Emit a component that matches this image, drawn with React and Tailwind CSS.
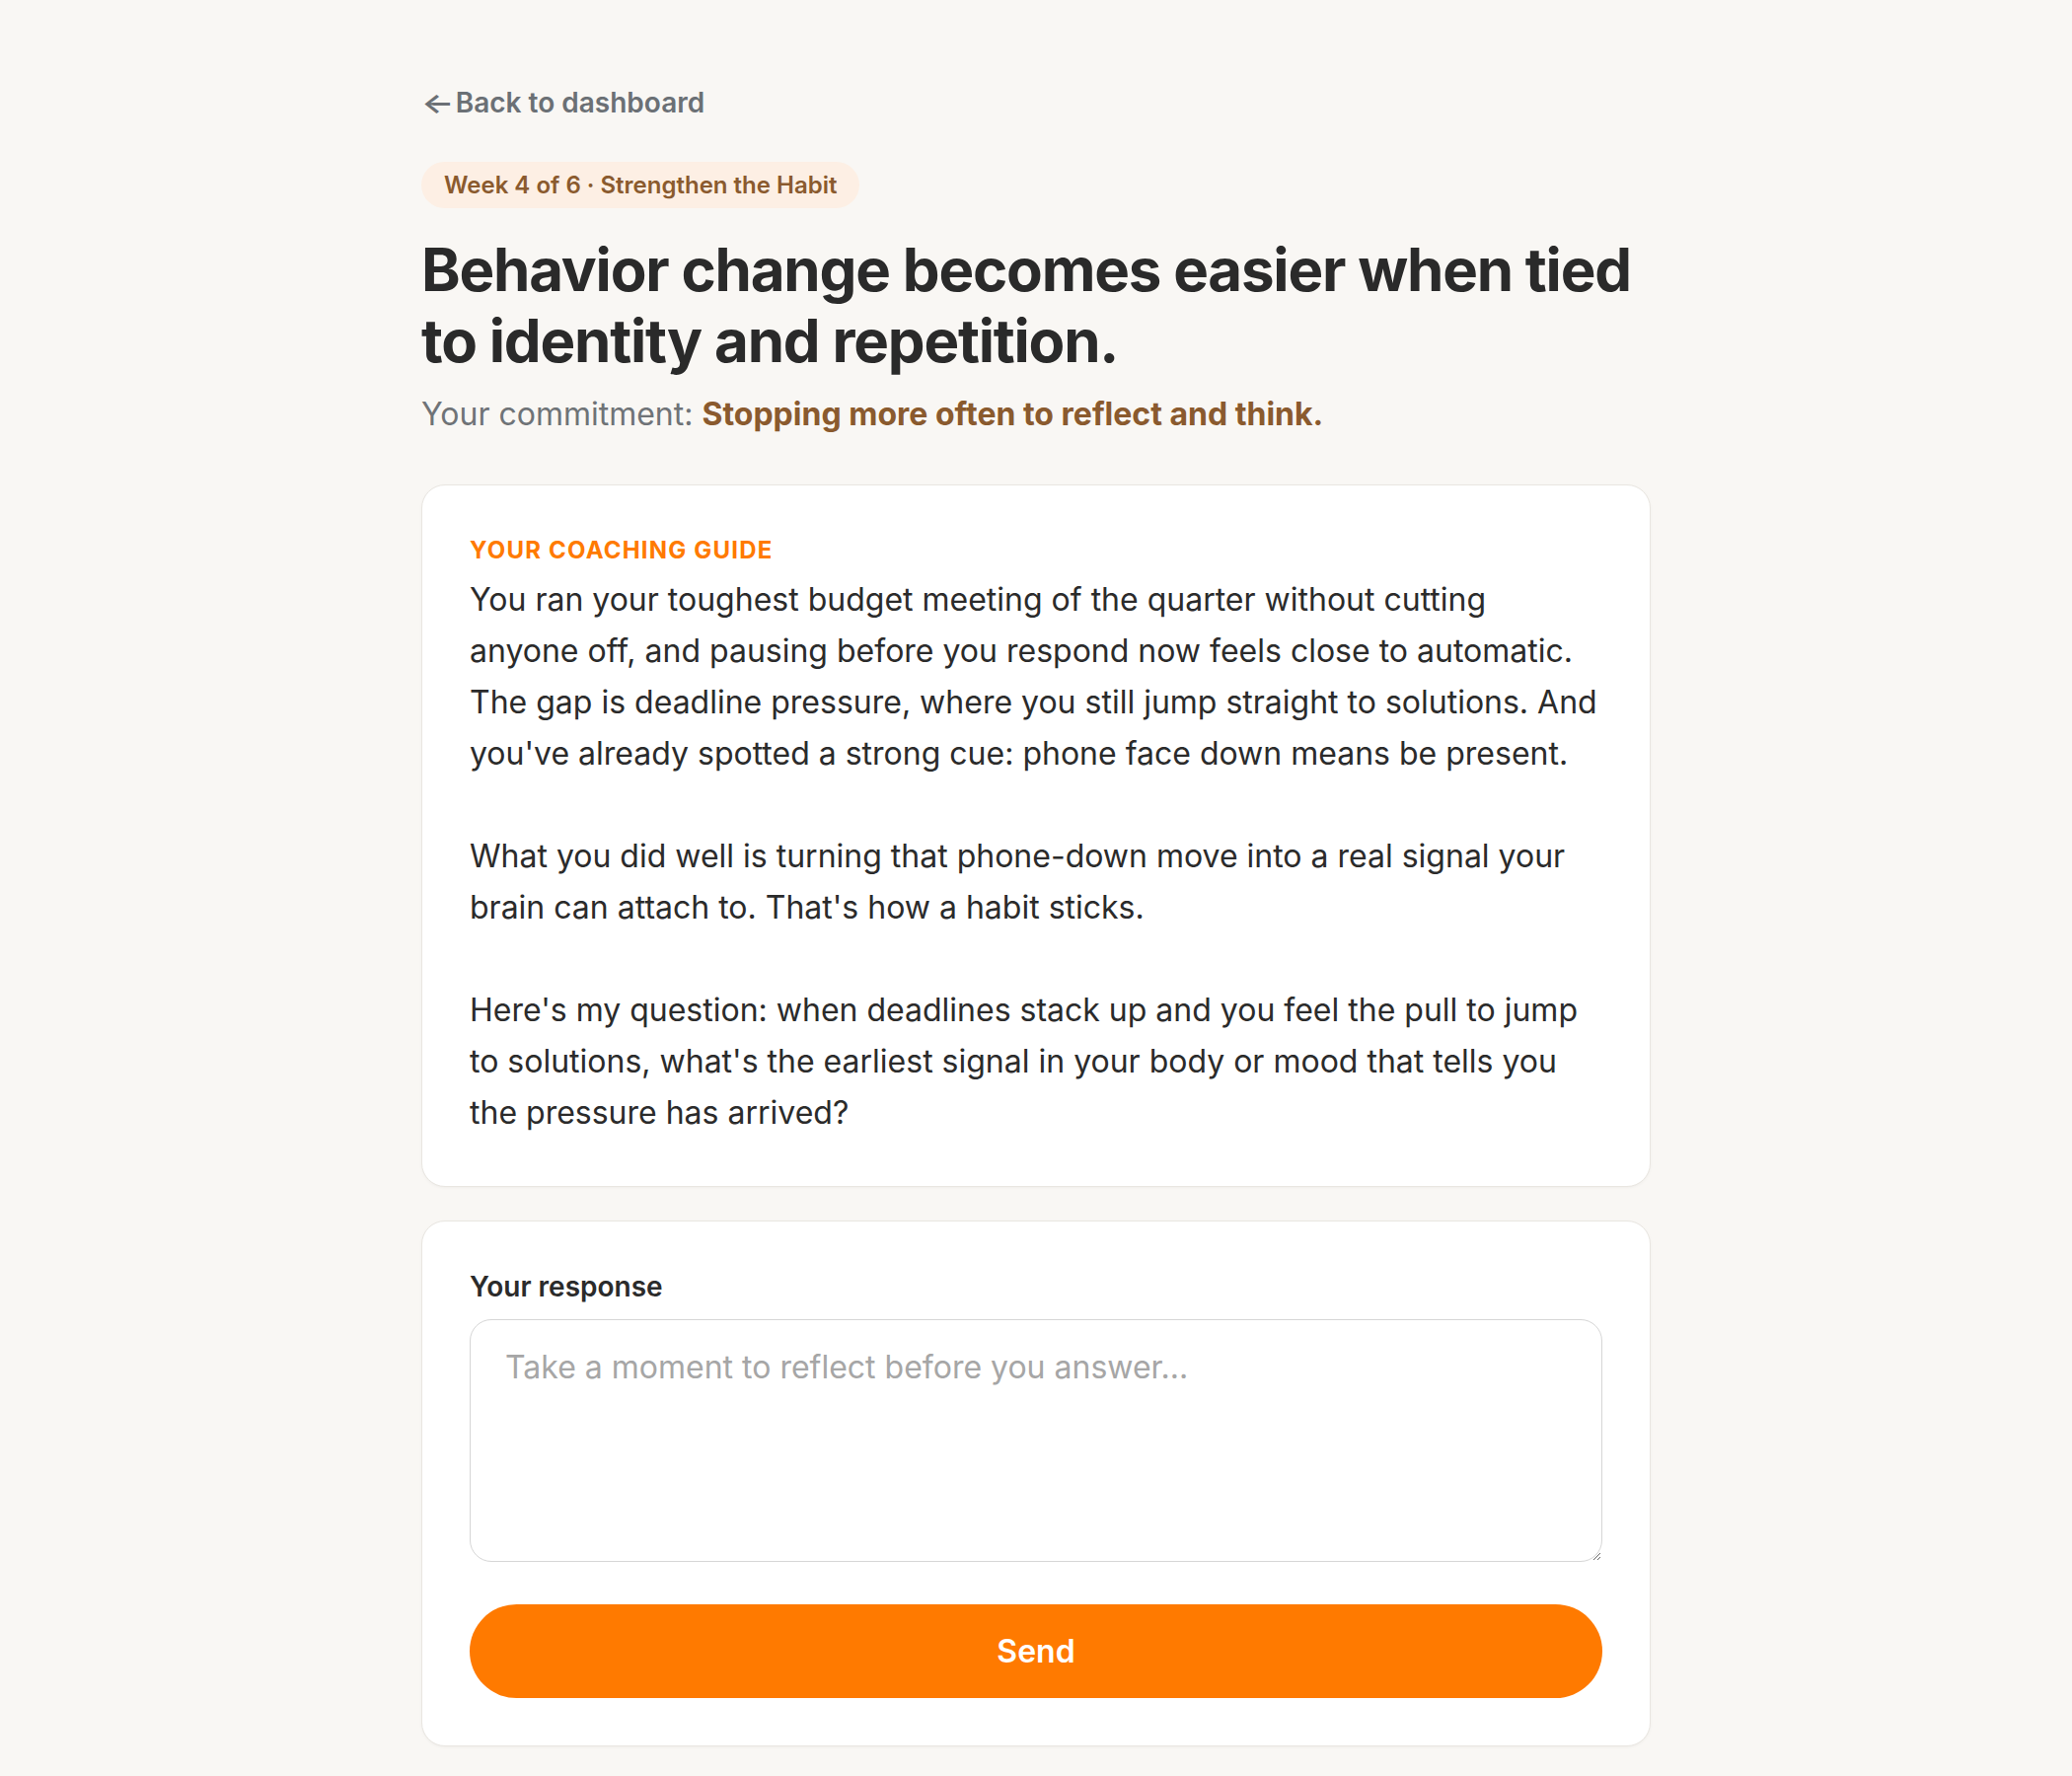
// App.jsx
// Weekly coaching check-in: the guide's message and a reply box.
const INTER = { fontFamily: 'Inter, "Noto Sans", sans-serif' };

const GUIDE = [
  "You ran your toughest budget meeting of the quarter without cutting anyone off, and pausing before you respond now feels close to automatic. The gap is deadline pressure, where you still jump straight to solutions. And you've already spotted a strong cue: phone face down means be present.",
  "What you did well is turning that phone-down move into a real signal your brain can attach to. That's how a habit sticks.",
  "Here's my question: when deadlines stack up and you feel the pull to jump to solutions, what's the earliest signal in your body or mood that tells you the pressure has arrived?",
];

function Card({ children }) {
  return (
    <section className="rounded-[24px] border-[1.5px] border-[#e9e6e1] bg-white px-[48px] py-[48px] shadow-[0_1px_3px_rgba(0,0,0,0.04)]">
      {children}
    </section>
  );
}

export default function App() {
  return (
    <div className="min-h-screen w-full bg-[#f9f7f4] text-[#2b2b2b]" style={INTER}>
      <main className="mx-auto w-[1246px] pt-[84px] pb-[40px] flex flex-col">
        <a href="#" className="self-start text-[28px] leading-[40px] font-semibold text-[#6b7075]">
          <span className="inline-block scale-x-125 origin-left mr-[8px]">←</span>Back to dashboard
        </a>

        <span className="mt-[40px] self-start rounded-full bg-[#fdefe4] px-[23px] py-[9px] text-[24px] leading-[29px] font-semibold text-[#8a5a2e]">
          Week 4 of 6 · Strengthen the Habit
        </span>

        <h1 className="mt-[26px] text-[60px] leading-[72px] font-bold tracking-[-0.02em] text-[#2a2a2a]">
          Behavior change becomes easier when tied to identity and repetition.
        </h1>

        <p className="mt-[16px] text-[32px] leading-[45px] text-[#6f7377]">
          Your commitment:{' '}
          <span className="font-bold text-[#8a5a2e]">Stopping more often to reflect and think.</span>
        </p>

        <div className="mt-[49px] flex flex-col gap-[34px]">
          <Card>
            <div className="text-[24px] leading-[36px] font-bold tracking-[0.05em] uppercase text-[#ff7a00]">
              Your coaching guide
            </div>
            <div className="mt-[6px] flex flex-col gap-[52px] text-[32px] leading-[52px] text-[#2b2b2b]">
              {GUIDE.map((p) => (
                <p key={p.slice(0, 12)}>{p}</p>
              ))}
            </div>
          </Card>

          <Card>
            <label htmlFor="reply" className="block text-[28px] leading-[36px] font-semibold text-[#2b2b2b]">
              Your response
            </label>
            <textarea
              id="reply"
              rows={4}
              placeholder="Take a moment to reflect before you answer..."
              className="mt-[15px] block h-[246px] w-full rounded-[22px] border-[1.5px] border-[#d6d6d6] bg-white px-[35px] pt-[24px] pb-[20px] text-[32px] leading-[48px] text-[#2b2b2b] placeholder:text-[#a6a6a6] outline-none"
            />
            <button className="mt-[43px] h-[95px] w-full rounded-full bg-[#ff7a00] text-[32px] font-semibold text-white">
              Send
            </button>
          </Card>
        </div>
      </main>
    </div>
  );
}
